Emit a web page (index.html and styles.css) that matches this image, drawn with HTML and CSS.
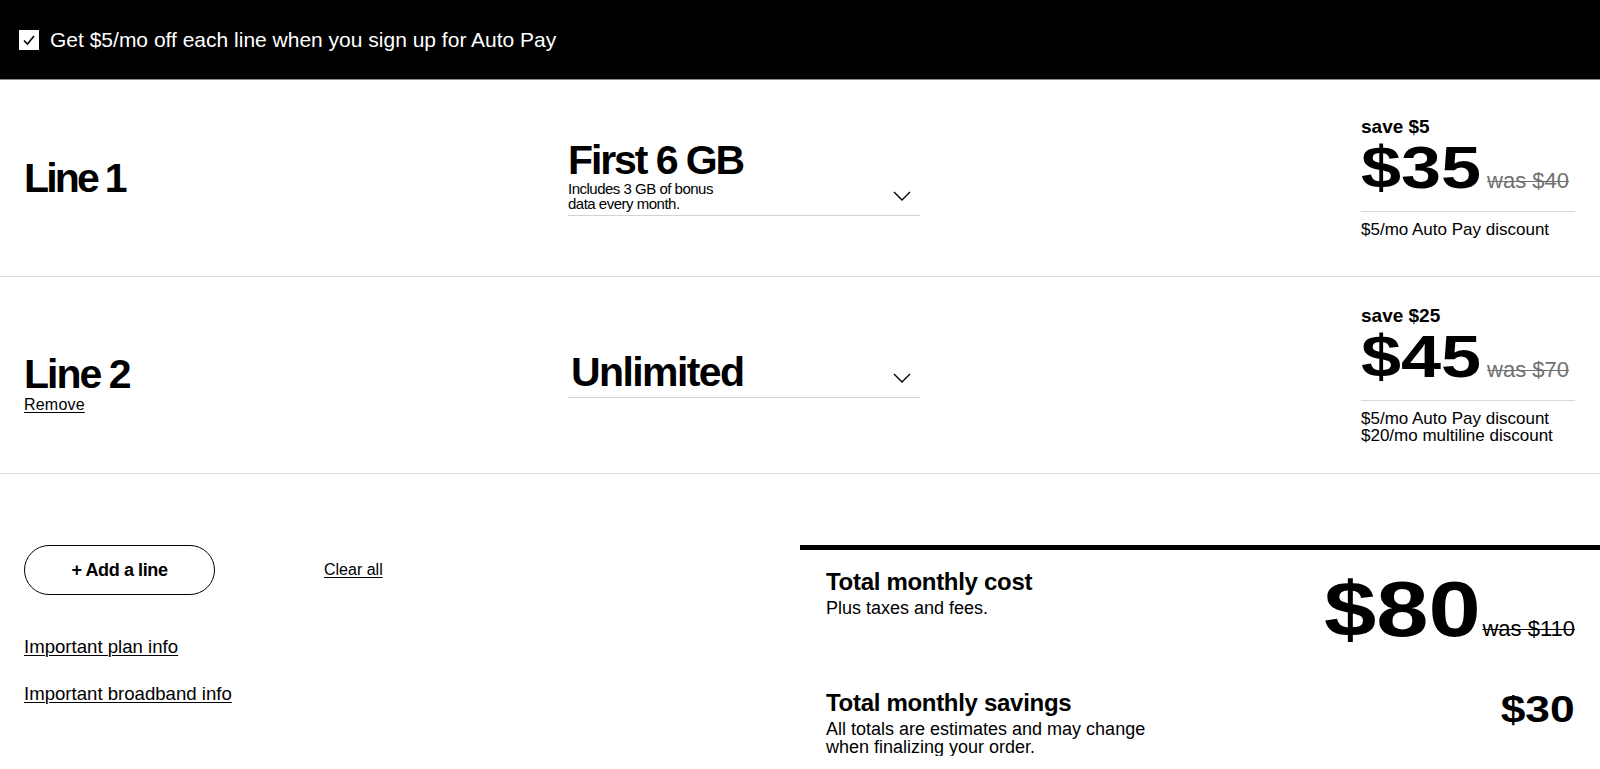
FILE: index.html
```html
<!DOCTYPE html>
<html lang="en">
<head>
<meta charset="utf-8">
<title>Plan builder</title>
<link rel="stylesheet" href="styles.css">
</head>
<body>
<header class="promo">
  <span class="checkbox"><svg viewBox="0 0 20 20" width="20" height="20"><polyline points="5,10.5 8.5,14 15,6" fill="none" stroke="#000" stroke-width="1.6"/></svg></span>
  <span class="promo-text">Get $5/mo off each line when you sign up for Auto Pay</span>
</header>

<section class="lines">
  <div class="line-row">
    <div class="line-label">
      <h2 class="line-title line-title-one">Line 1</h2>
    </div>
    <div class="plan-select">
      <div class="plan-text">
        <div class="plan-name">First 6 GB</div>
        <div class="plan-desc">Includes 3 GB of bonus<br>data every month.</div>
      </div>
      <svg class="chevron" viewBox="0 0 18 10" width="18" height="10"><polyline points="1,1 9,9 17,1" fill="none" stroke="#000" stroke-width="1.4"/></svg>
    </div>
    <div class="price">
      <div class="save">save $5</div>
      <div class="price-main"><span class="amount">$35</span><span class="was">was $40</span></div>
      <div class="price-divider"></div>
      <div class="discounts">$5/mo Auto Pay discount</div>
    </div>
  </div>

  <div class="line-row">
    <div class="line-label line-label-low">
      <h2 class="line-title">Line 2</h2>
      <a class="link remove" href="#">Remove</a>
    </div>
    <div class="plan-select">
      <div class="plan-text">
        <div class="plan-name plan-name-wide">Unlimited</div>
      </div>
      <svg class="chevron" viewBox="0 0 18 10" width="18" height="10"><polyline points="1,1 9,9 17,1" fill="none" stroke="#000" stroke-width="1.4"/></svg>
    </div>
    <div class="price">
      <div class="save">save $25</div>
      <div class="price-main"><span class="amount">$45</span><span class="was">was $70</span></div>
      <div class="price-divider"></div>
      <div class="discounts">$5/mo Auto Pay discount<br>$20/mo multiline discount</div>
    </div>
  </div>
</section>

<section class="bottom">
  <div class="actions">
    <div class="action-row">
      <button class="add-btn" type="button">+ Add a line</button>
      <a class="link clear" href="#">Clear all</a>
    </div>
    <a class="link info info-first" href="#">Important plan info</a>
    <a class="link info info-second" href="#">Important broadband info</a>
  </div>
  <div class="totals">
    <div class="total-row">
      <div class="total-text">
        <div class="total-title">Total monthly cost</div>
        <div class="total-sub">Plus taxes and fees.</div>
      </div>
      <div class="total-price"><span class="amount-xl">$80</span><span class="was-dark">was $110</span></div>
    </div>
    <div class="total-row savings">
      <div class="total-text">
        <div class="total-title">Total monthly savings</div>
        <div class="savings-sub">All totals are estimates and may change<br>when finalizing your order.</div>
      </div>
      <div class="amount-md">$30</div>
    </div>
  </div>
</section>
</body>
</html>
```

FILE: styles.css
```css
* { box-sizing: border-box; }

body {
  margin: 0;
  width: 1600px;
  background: #fff;
  color: #000;
  font-family: "Liberation Sans", Arial, sans-serif;
}

/* promo bar */
.promo {
  height: 80px;
  background: #000;
  border-bottom: 1px solid #8c8c8c;
  display: flex;
  align-items: center;
  padding-left: 19px;
  gap: 11px;
}
.checkbox {
  width: 20px;
  height: 20px;
  background: #fff;
  display: flex;
}
.promo-text {
  color: #fff;
  font-size: 21px;
}

/* line rows */
.line-row {
  display: grid;
  grid-template-columns: 544px 352px 1fr 214px;
  align-items: center;
  height: 197px;
  padding: 0 25px 0 24px;
  border-bottom: 1px solid #d8dada;
}
.line-title {
  margin: 0;
  font-size: 41px;
  font-weight: 700;
  line-height: 1;
  letter-spacing: -2px;
  word-spacing: -1px;
}
.line-title-one { letter-spacing: -2.8px; }
.line-label {
  display: flex;
  flex-direction: column;
  align-items: flex-start;
}
.line-label-low { margin-top: 18px; }

.link {
  color: #000;
  text-decoration: underline;
  text-underline-offset: 2px;
  text-decoration-thickness: 1px;
}
.remove {
  font-size: 16px;
  line-height: 1.2;
  letter-spacing: 0.2px;
}

.plan-select {
  display: flex;
  align-items: flex-end;
  justify-content: space-between;
  border-bottom: 1px solid #d3d3d3;
  padding-bottom: 4px;
  padding-right: 9px;
}
.plan-name {
  font-size: 41px;
  font-weight: 700;
  line-height: 1;
  letter-spacing: -2.1px;
}
.plan-name-wide { letter-spacing: -1.6px; padding-left: 3px; }
.plan-desc {
  font-size: 15px;
  line-height: 15px;
  letter-spacing: -0.5px;
}
.chevron {
  display: block;
  margin-bottom: 10px;
}

.price { grid-column: 4; }
.save {
  font-size: 19px;
  font-weight: 700;
  line-height: 1;
}
.price-main {
  display: flex;
  align-items: baseline;
  gap: 6px;
  margin-top: 2px;
}
.amount {
  display: inline-block;
  font-weight: 700;
  font-size: 60px;
  line-height: 1;
  transform: scaleX(1.2);
  transform-origin: left center;
  margin-right: 20px;
}
.was {
  font-size: 22px;
  line-height: 1;
  color: #6f7171;
  text-decoration: line-through;
  text-decoration-thickness: 1px;
}
.price-divider {
  border-top: 1px solid #d8dada;
  margin-top: 13px;
}
.discounts {
  font-size: 17px;
  line-height: 17.5px;
  margin-top: 9px;
}

/* bottom */
.bottom {
  display: grid;
  grid-template-columns: 800px 800px;
  padding-top: 71px;
}
.actions {
  padding-left: 24px;
  display: flex;
  flex-direction: column;
  align-items: flex-start;
}
.action-row {
  display: flex;
  align-items: center;
  gap: 109px;
}
.add-btn {
  width: 191px;
  height: 50px;
  border: 1px solid #000;
  border-radius: 25px;
  background: #fff;
  color: #000;
  font-family: "Liberation Sans", Arial, sans-serif;
  font-size: 18px;
  font-weight: 700;
  letter-spacing: -0.4px;
  padding: 0;
}
.clear {
  font-size: 16px;
  line-height: 1.2;
}
.info {
  font-size: 18.6px;
  line-height: 1.2;
}
.info-first { margin-top: 41px; }
.info-second { margin-top: 25px; }

.totals {
  border-top: 5px solid #000;
  padding: 18px 25px 0 26px;
}
.total-row {
  display: flex;
  justify-content: space-between;
  align-items: flex-start;
}
.total-title {
  font-size: 24px;
  font-weight: 700;
  line-height: 1.2;
  letter-spacing: -0.3px;
}
.total-sub {
  font-size: 18px;
  line-height: 1.2;
  margin-top: 1px;
}
.total-price {
  display: flex;
  align-items: baseline;
  gap: 2px;
  margin-top: 3px;
}
.amount-xl {
  display: inline-block;
  font-weight: 700;
  font-size: 77px;
  line-height: 1;
  transform: scaleX(1.22);
  transform-origin: left center;
  margin-right: 28px;
}
.was-dark {
  font-size: 22px;
  line-height: 1;
  text-decoration: line-through;
  text-decoration-thickness: 1px;
}
.savings { margin-top: 41px; }
.savings-sub {
  font-size: 18px;
  line-height: 18px;
  margin-top: 2px;
}
.amount-md {
  display: inline-block;
  font-weight: 700;
  font-size: 37px;
  line-height: 1;
  margin-top: 2px;
  transform: scaleX(1.2);
  transform-origin: right center;
}
```
